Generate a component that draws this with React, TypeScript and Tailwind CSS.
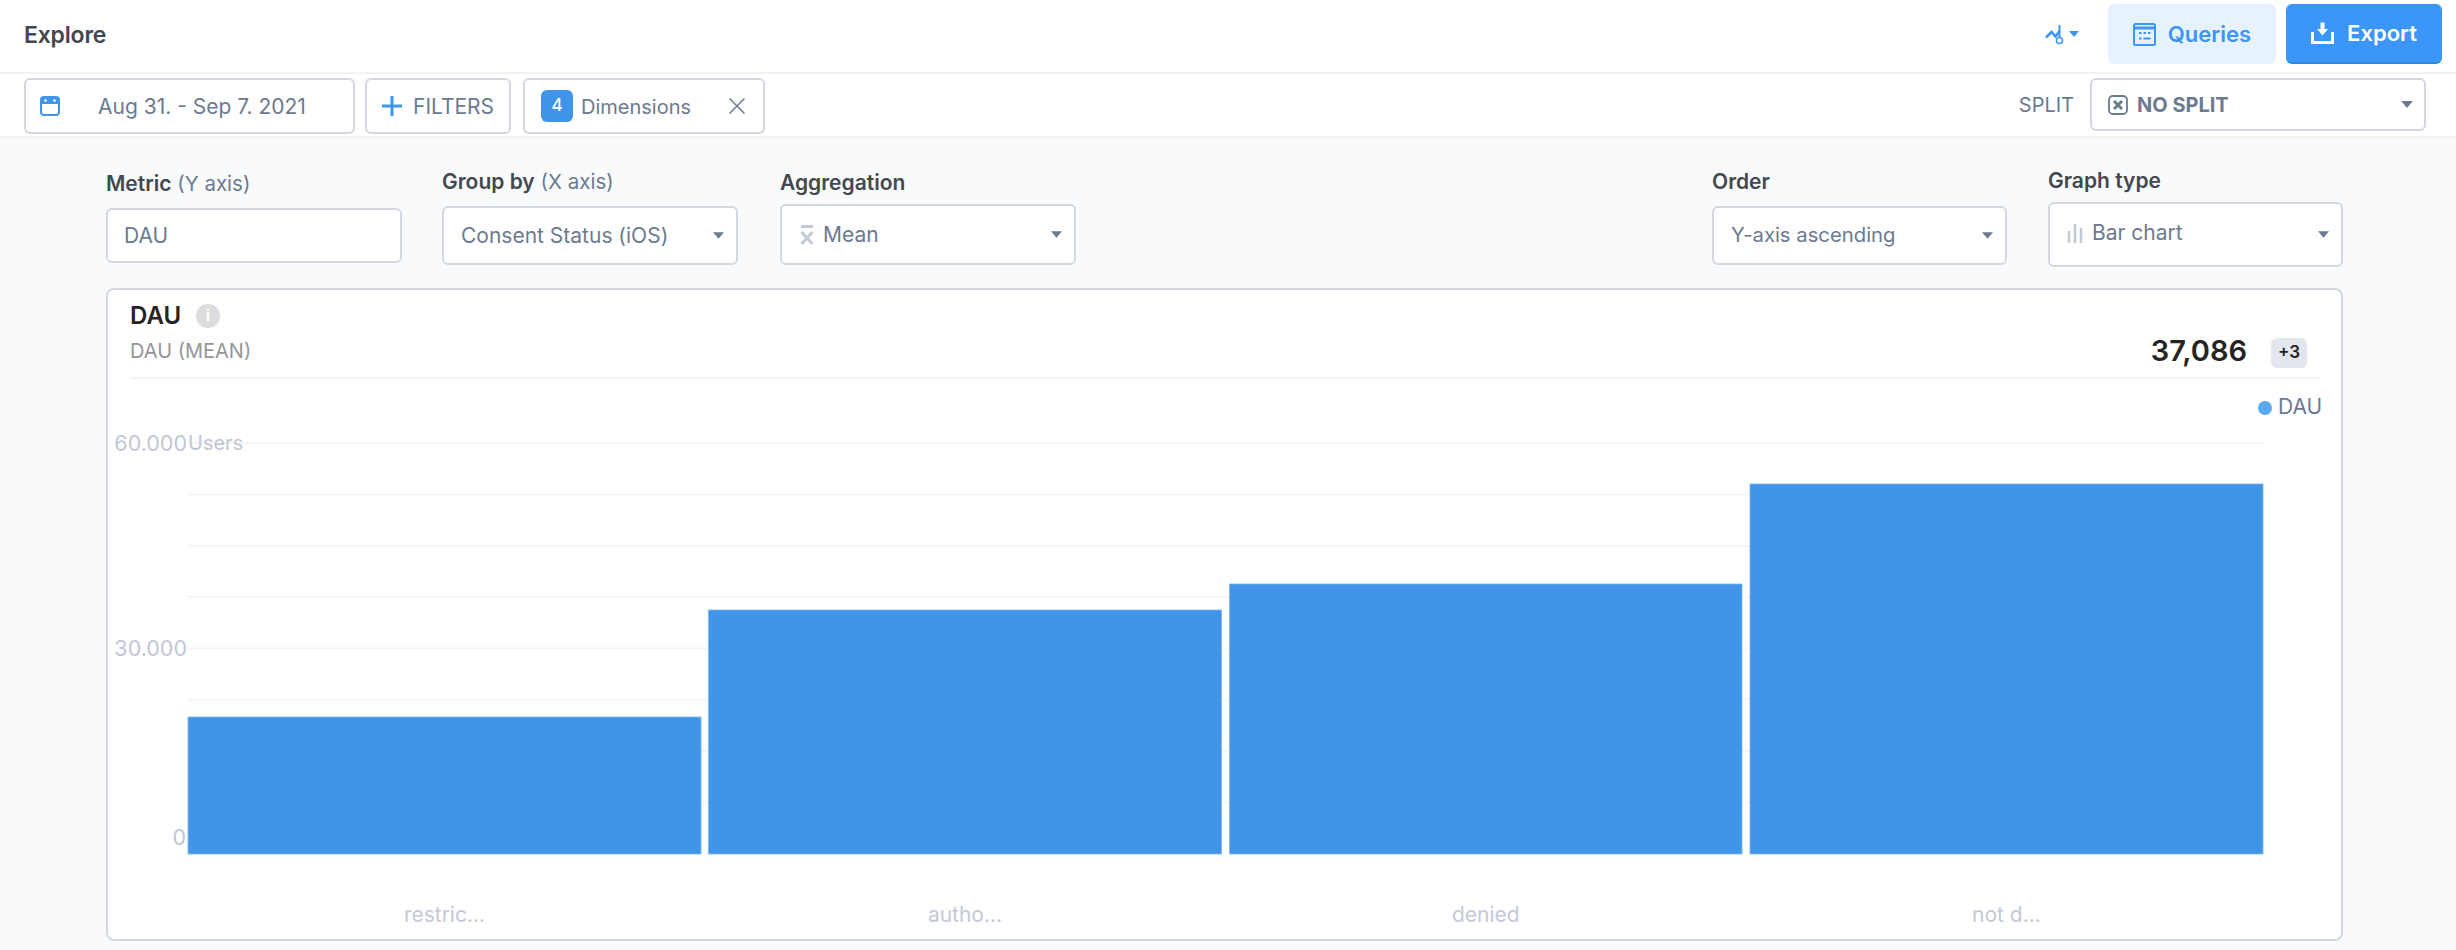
import React from "react";

const Caret = ({ color = "#6b7a90", w = 11, h = 7 }: { color?: string; w?: number; h?: number }) => (
  <svg width={w} height={h} viewBox="0 0 10 6" className="shrink-0">
    <path d="M0 0H10L5 6Z" fill={color} />
  </svg>
);

const Field = ({
  title,
  hint,
  children,
  labelTop,
  gap,
  width = "w-[296px]",
}: {
  title: string;
  hint?: string;
  children: React.ReactNode;
  labelTop: string;
  gap: string;
  width?: string;
}) => (
  <div className={`${width} flex flex-col ${labelTop}`}>
    <div className={`h-[24px] leading-[24px] text-[21px] whitespace-nowrap ${gap}`}>
      <span className="font-semibold text-[#43484f]">{title}</span>
      {hint && <span className="text-[20.5px] text-[#6b7a90]"> {hint}</span>}
    </div>
    {children}
  </div>
);

const Select = ({ h, children, size = "text-[21px]" }: { h: string; children: React.ReactNode; size?: string }) => (
  <div className={`${h} flex items-center justify-between bg-white border-2 border-[#d3d8e0] rounded-[6px] pl-[17px] pr-[12px] ${size} text-[#6b7a90]`}>
    <div className="flex items-center">{children}</div>
    <Caret />
  </div>
);

const bars = [
  { x: 188, w: 513, top: 717, label: "restric..." },
  { x: 708.5, w: 513, top: 610, label: "autho..." },
  { x: 1229.5, w: 512.5, top: 584, label: "denied" },
  { x: 1750, w: 513, top: 484, label: "not d..." },
];
const grid = [443, 494.4, 545.8, 597, 648.5, 699.5, 751, 802.5];

export default function App() {
  return (
    <div className="w-[2456px] h-[950px] overflow-hidden bg-[#f9fafc] flex flex-col font-['Inter','Liberation_Sans',sans-serif]">
      <header className="h-[74px] shrink-0 bg-white border-b-2 border-[#f1f2f4] flex items-center pl-[24px] pr-[14px] pb-[4px]">
        <div className="text-[23px] mt-[3px] font-semibold text-[#43484f] tracking-[-0.2px]">Explore</div>
        <div className="ml-auto flex items-center">
          <svg width="34" height="22" viewBox="0 0 34 22" className="mr-[29px] mt-[4px]">
            <path d="M1 12.5 6.5 7l4 4.5 4-5.5" fill="none" stroke="#3b96f7" strokeWidth="2.6" />
            <path d="M14.5 0V13" stroke="#3b96f7" strokeWidth="2" />
            <circle cx="14.5" cy="15.5" r="3" fill="none" stroke="#3b96f7" strokeWidth="1.6" />
            <path d="M24 6h10l-5 6Z" fill="#3b96f7" />
          </svg>
          <button className="w-[168px] h-[60px] rounded-[6px] bg-[#e6f3fe] flex items-center justify-center gap-[12px] text-[#3b96f7] text-[22px] font-semibold">
            <svg width="23" height="23" viewBox="0 0 23 23">
              <rect x="1" y="1" width="21" height="21" rx="1.5" fill="none" stroke="#3b96f7" strokeWidth="2" />
              <path d="M1 5h21" stroke="#3b96f7" strokeWidth="3" />
              <path d="M6 10h2.500M10.500 10H13M15 10h2.500M6 15.500h2.500M10.500 15.500h7" stroke="#3b96f7" strokeWidth="2" />
            </svg>
            Queries
          </button>
          <button className="ml-[10px] w-[156px] h-[60px] rounded-[6px] bg-[#3b96f7] border-b-2 border-[#2f86e2] flex items-center justify-center gap-[13px] text-white text-[22px] font-semibold">
            <svg width="23" height="23" viewBox="0 0 23 23">
              <path d="M1.500 10v10.500h20V10" fill="none" stroke="#fff" strokeWidth="3" />
              <path d="M9.500 0.500h4V7H17l-5.500 6.500L6 7h3.500Z" fill="#fff" />
            </svg>
            Export
          </button>
        </div>
      </header>

      <div className="h-[64px] shrink-0 bg-white border-b-2 border-[#f1f2f4] flex items-start pl-[24px] pr-[30px] pt-[4px] text-[#6b7a90] text-[21px]">
        <div className="w-[331px] h-[56px] border-2 border-[#d3d8e0] rounded-[6px] flex items-center pl-[14px]">
          <svg width="20" height="20" viewBox="0 0 20 20" className="mr-[38px]">
            <rect x="1" y="1" width="18" height="18" rx="3" fill="none" stroke="#4195e8" strokeWidth="2" />
            <path d="M1 3.500a2.500 2.500 0 0 1 2.500-2.500h13a2.500 2.500 0 0 1 2.500 2.500V8H1Z" fill="#4195e8" />
            <circle cx="5.500" cy="4.500" r="1.300" fill="#fff" />
            <circle cx="14.500" cy="4.500" r="1.300" fill="#fff" />
          </svg>
          <span className="mt-[1px]">Aug 31. - Sep 7. 2021</span>
        </div>
        <div className="ml-[10px] w-[146px] h-[56px] border-2 border-[#d3d8e0] rounded-[6px] flex items-center pl-[15px]">
          <svg width="20" height="20" viewBox="0 0 20 20" className="mr-[11px]">
            <path d="M10 0v20M0 10h20" stroke="#3b96f7" strokeWidth="3" />
          </svg>
          <span className="mt-[1px]">FILTERS</span>
        </div>
        <div className="ml-[12px] w-[242px] h-[56px] border-2 border-[#d3d8e0] rounded-[6px] flex items-center pl-[16px] text-[20px]">
          <span className="w-[32px] h-[32px] rounded-[6px] bg-[#4195e8] text-white text-[17px] font-medium flex items-center justify-center mr-[8px]">4</span>
          <span className="mt-[1px]">Dimensions</span>
          <svg width="16" height="16" viewBox="0 0 16 16" className="ml-[38px]">
            <path d="M0.500 0.500l15 15M15.500 0.500l-15 15" stroke="#6b7a90" strokeWidth="1.500" />
          </svg>
        </div>
        <div className="ml-auto flex items-center">
          <span className="text-[20px] mr-[16px]">SPLIT</span>
          <div className="w-[336px] h-[53px] border-2 border-[#d3d8e0] rounded-[6px] flex items-center pl-[16px] pr-[11px]">
            <svg width="20" height="20" viewBox="0 0 20 20" className="mr-[9px]">
              <rect x="1" y="1" width="18" height="18" rx="4" fill="none" stroke="#6b7a90" strokeWidth="1.800" />
              <path d="M6 6l8 8M14 6l-8 8" stroke="#6b7a90" strokeWidth="3" />
            </svg>
            <span className="font-bold text-[20px]">NO SPLIT</span>
            <span className="ml-auto"><Caret w={12} h={7} /></span>
          </div>
        </div>
      </div>

      <main className="flex-1 min-h-0 flex flex-col">
        <div className="h-[150px] shrink-0 flex pl-[106px] pr-[113px]">
          <Field title="Metric" hint="(Y axis)" labelTop="mt-[34px]" gap="mb-[12px]">
            <div className="h-[55px] flex items-center bg-white border-2 border-[#d3d8e0] rounded-[6px] pl-[16px] text-[21px] text-[#6b7a90]">DAU</div>
          </Field>
          <div className="ml-[40px]">
            <Field title="Group by" hint="(X axis)" labelTop="mt-[32px]" gap="mb-[12px]">
              <Select h="h-[59px]">Consent Status (iOS)</Select>
            </Field>
          </div>
          <div className="ml-[42px]">
            <Field title="Aggregation" labelTop="mt-[33px]" gap="mb-[9px]">
              <Select h="h-[61px]">
                <svg width="14" height="20" viewBox="0 0 14 20" className="mr-[9px] ml-[1px]">
                  <path d="M1 1.500h12" stroke="#c3c9d6" strokeWidth="3" />
                  <path d="M1.500 7l11 12M12.500 7l-11 12" stroke="#c3c9d6" strokeWidth="3" />
                </svg>
                Mean
              </Select>
            </Field>
          </div>
          <div className="ml-auto">
            <Field title="Order" width="w-[295px]" labelTop="mt-[32px]" gap="mb-[12px]">
              <Select h="h-[59px]" size="text-[20.3px]">Y-axis ascending</Select>
            </Field>
          </div>
          <div className="ml-[41px]">
            <Field title="Graph type" width="w-[295px]" labelTop="mt-[31px]" gap="mb-[9px]">
              <Select h="h-[65px]">
                <svg width="16" height="20" viewBox="0 0 16 20" className="mr-[9px] -mt-[4px]">
                  <path d="M2 8v12M8 1v19M14 5v15" stroke="#c3c9d6" strokeWidth="2.600" />
                </svg>
                <span className="-mt-[4px]">Bar chart</span>
              </Select>
            </Field>
          </div>
        </div>

        <section className="ml-[106px] w-[2237px] h-[653px] shrink-0 bg-white border-2 border-[#d3d8e0] rounded-[8px] flex flex-col overflow-hidden">
          <div className="h-[89px] shrink-0 mx-[22px] border-b-2 border-[#f1f2f4] relative flex justify-between">
            <div>
              <div className="flex items-center mt-[12px] h-[28px]">
                <span className="text-[24px] font-semibold text-[#262422]">DAU</span>
                <span className="ml-[15px] w-[24px] h-[24px] rounded-full bg-[#dcdcdc] text-white text-[15px] font-bold flex items-center justify-center">i</span>
              </div>
              <div className="mt-[9px] text-[20px] leading-[24px] text-[#969696]">DAU (MEAN)</div>
            </div>
            <div className="flex items-start mt-[46px] mr-[12px]">
              <span className="text-[29px] leading-[30px] font-semibold text-[#262422]">37,086</span>
              <span className="ml-[24px] mt-[2px] w-[36px] h-[30px] rounded-[6px] bg-[#e4e6ee] text-[#262422] text-[17px] font-semibold flex items-center justify-center">+3</span>
            </div>
          </div>
          <svg className="block flex-1 w-full" viewBox="108 379 2233 560" fontFamily="Inter, 'Liberation Sans', sans-serif">
            {grid.map((y) => (
              <line key={y} x1={188} x2={2263} y1={y} y2={y} stroke="#f4f5f7" strokeWidth={2} />
            ))}
            {bars.map((b) => (
              <g key={b.x}>
                <rect x={b.x} y={b.top} width={b.w} height={854 - b.top} fill="#4195e8" stroke="#7ab6f0" strokeWidth={0.8} />
                <text x={b.x + b.w / 2} y={922} textAnchor="middle" fontSize={21} fill="#c3c9d8">{b.label}</text>
              </g>
            ))}
            <text x={187} y={451} textAnchor="end" fontSize={21.5} fill="#bfc6d6">60.000</text>
            <text x={188} y={450} fontSize={20} fill="#bfc6d6">Users</text>
            <text x={187} y={656} textAnchor="end" fontSize={21.5} fill="#bfc6d6">30.000</text>
            <text x={186} y={845} textAnchor="end" fontSize={21.5} fill="#bfc6d6">0</text>
            <circle cx={2265} cy={408} r={7} fill="#5aa9ee" />
            <text x={2278} y={414} fontSize={21} fill="#6b7a94">DAU</text>
          </svg>
        </section>
      </main>
    </div>
  );
}
